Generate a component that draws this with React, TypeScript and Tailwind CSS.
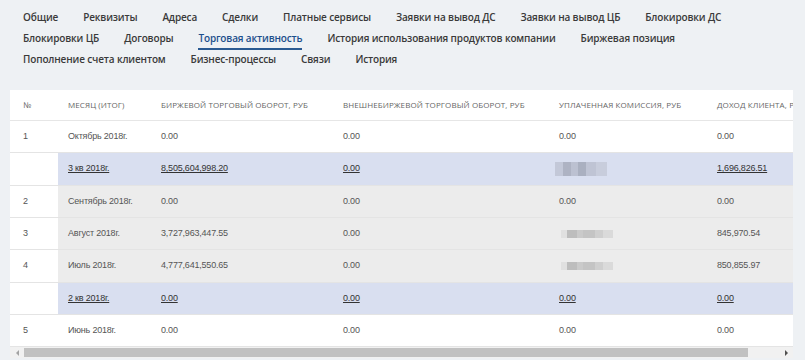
import React from "react";

type Kind = "plain" | "gray" | "quarter";

interface Row {
  num: string;
  month: string;
  birzh: string;
  vne: string;
  comm: string | "blur";
  income: string;
  kind: Kind;
  h: string;
}

const tabRows: string[][] = [
  ["Общие", "Реквизиты", "Адреса", "Сделки", "Платные сервисы", "Заявки на вывод ДС", "Заявки на вывод ЦБ", "Блокировки ДС"],
  ["Блокировки ЦБ", "Договоры", "Торговая активность", "История использования продуктов компании", "Биржевая позиция"],
  ["Пополнение счета клиентом", "Бизнес-процессы", "Связи", "История"],
];

const rows: Row[] = [
  { num: "1", month: "Октябрь 2018г.", birzh: "0.00", vne: "0.00", comm: "0.00", income: "0.00", kind: "plain", h: "h-[32px]" },
  { num: "", month: "3 кв 2018г.", birzh: "8,505,604,998.20", vne: "0.00", comm: "blur", income: "1,696,826.51", kind: "quarter", h: "h-[33px]" },
  { num: "2", month: "Сентябрь 2018г.", birzh: "0.00", vne: "0.00", comm: "0.00", income: "0.00", kind: "gray", h: "h-[32px]" },
  { num: "3", month: "Август 2018г.", birzh: "3,727,963,447.55", vne: "0.00", comm: "blur", income: "845,970.54", kind: "gray", h: "h-[32px]" },
  { num: "4", month: "Июль 2018г.", birzh: "4,777,641,550.65", vne: "0.00", comm: "blur", income: "850,855.97", kind: "gray", h: "h-[33px]" },
  { num: "", month: "2 кв 2018г.", birzh: "0.00", vne: "0.00", comm: "0.00", income: "0.00", kind: "quarter", h: "h-[32px]" },
  { num: "5", month: "Июнь 2018г.", birzh: "0.00", vne: "0.00", comm: "0.00", income: "0.00", kind: "plain", h: "h-[32px]" },
];

function Blurred({ quarter }: { quarter: boolean }) {
  if (quarter) {
    return (
      <div className="flex h-[14px] w-[52px] blur-[0.6px] bg-[#c9cedd]">
        <div className="w-[8px] bg-[#c3c8d8]" />
        <div className="w-[8px] bg-[#aeb3c3]" />
        <div className="w-[7px] bg-[#bcc1d1]" />
        <div className="w-[8px] bg-[#aab0c0]" />
        <div className="w-[10px] bg-[#bfc4d4]" />
        <div className="w-[11px] bg-[#c8cddc]" />
      </div>
    );
  }
  return (
    <div className="flex h-[8px] w-[52px] blur-[0.5px] bg-[#d6d6d6]">
      <div className="w-[6px] bg-[#e0e0e0]" />
      <div className="w-[10px] bg-[#bdbdbd]" />
      <div className="w-[6px] bg-[#cacaca]" />
      <div className="w-[12px] bg-[#c4c4c4]" />
      <div className="w-[8px] bg-[#cfcfcf]" />
      <div className="w-[10px] bg-[#dadada]" />
    </div>
  );
}

export default function App() {
  return (
    <div className="w-[805px] h-[360px] overflow-hidden bg-[#eef1f4] font-['Open_Sans',sans-serif]">
      <div className="pt-[8px] pl-[23px] flex flex-col">
        {tabRows.map((row, i) => (
          <div key={i} className="flex gap-x-[25px]">
            {row.map((t) => {
              const active = t === "Торговая активность";
              return (
                <div
                  key={t}
                  className={
                    "h-[21px] leading-[19px] text-[10px] tracking-[-0.15px] font-semibold whitespace-nowrap border-b-2 " +
                    (active ? "text-[#1d4f8c] border-[#2a5a92]" : "text-[#3a3a3a] border-transparent")
                  }
                >
                  {t}
                </div>
              );
            })}
          </div>
        ))}
      </div>

      <div className="ml-[10px] mt-[19px] w-[783px] bg-white overflow-hidden">
        <div className="flex h-[31px] items-center border-b border-[#e6e6e6] text-[8px] uppercase tracking-[0.1px] text-[#666] whitespace-nowrap">
          <div className="w-[48px] shrink-0 pl-[13px]">№</div>
          <div className="w-[93px] shrink-0 pl-[10px]">Месяц (итог)</div>
          <div className="w-[182px] shrink-0 pl-[10px]">Биржевой торговый оборот, руб</div>
          <div className="w-[216px] shrink-0 pl-[10px]">Внешнебиржевой торговый оборот, руб</div>
          <div className="w-[158px] shrink-0 pl-[10px]">Уплаченная комиссия, руб</div>
          <div className="w-[220px] shrink-0 pl-[10px]">Доход клиента, руб</div>
        </div>

        {rows.map((r, i) => {
          const q = r.kind === "quarter";
          const bg = q ? "bg-[#d9dff0]" : r.kind === "gray" ? "bg-[#ececec]" : "bg-white";
          const txt = q ? "underline text-[#333]" : "text-[#555]";
          return (
            <div
              key={i}
              className={"flex border-b border-[#e4e4e4] font-['Liberation_Sans',Arial,sans-serif] text-[9px] tracking-[-0.2px] whitespace-nowrap " + r.h}
            >
              <div className="w-[48px] shrink-0 pl-[13px] flex items-center bg-white text-[#555]">{r.num}</div>
              <div className={"flex flex-1 items-center " + bg + " " + txt}>
                <div className="w-[93px] shrink-0 pl-[10px]">{r.month}</div>
                <div className="w-[182px] shrink-0 pl-[10px]">{r.birzh}</div>
                <div className="w-[216px] shrink-0 pl-[10px]">{r.vne}</div>
                <div className={"w-[158px] shrink-0 " + (r.comm === "blur" ? (q ? "pl-[6px]" : "pl-[12px]") : "pl-[10px]")}>
                  {r.comm === "blur" ? <Blurred quarter={q} /> : r.comm}
                </div>
                <div className="w-[220px] shrink-0 pl-[10px]">{r.income}</div>
              </div>
            </div>
          );
        })}

        <div className="flex h-[11px] items-center bg-[#f1f1f1]">
          <div className="w-[14px] flex justify-center">
            <div className="w-0 h-0 border-y-[3px] border-y-transparent border-r-[3px] border-r-[#a3a3a3]" />
          </div>
          <div className="w-[724px] h-[9px] bg-[#c1c1c1]" />
          <div className="flex-1 flex justify-end pr-[5px]">
            <div className="w-0 h-0 border-y-[3px] border-y-transparent border-l-[3px] border-l-[#505050]" />
          </div>
        </div>
      </div>
    </div>
  );
}
